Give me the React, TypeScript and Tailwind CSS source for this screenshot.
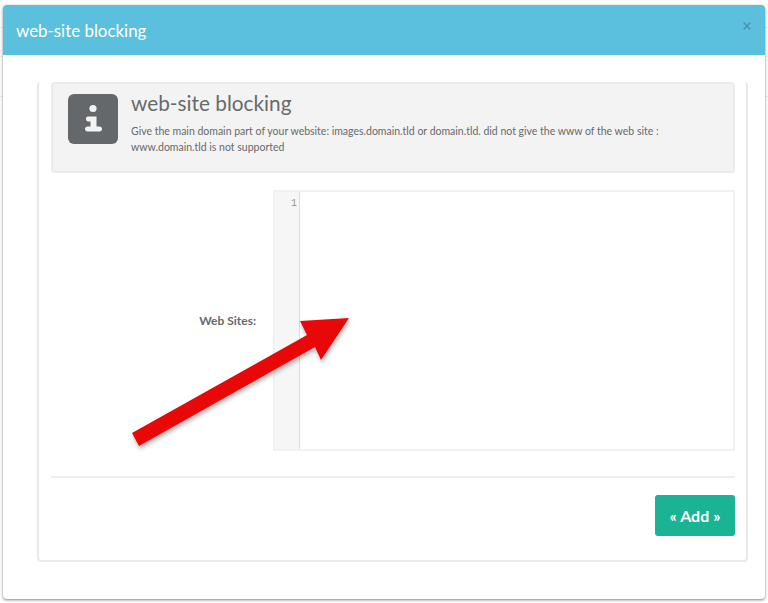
import React from 'react';
import { X } from 'lucide-react';

function InfoIcon() {
  return (
    <svg viewBox="0 0 50 50" className="h-[50px] w-[50px] shrink-0">
      <rect width="50" height="50" rx="6" fill="#65686a" />
      <circle cx="25" cy="14.500" r="3.600" fill="#f3f3f3" />
      <path
        d="M18 22.500h10.500v10h3c1.500 0 2.500 1 2.500 2.500s-1 2.500-2.500 2.500h-12c-1.500 0-2.500-1-2.500-2.500s1-2.500 2.500-2.500h3v-5h-2c-2 0-2.500-1-2.500-2.500s.5-2.500 2-2.500z"
        fill="#f3f3f3"
      />
    </svg>
  );
}

function Arrow() {
  return (
    <svg
      viewBox="0 0 240 160"
      className="absolute left-[120px] top-[300px] h-[160px] w-[240px] drop-shadow-[1px_3px_2px_rgba(0,0,0,0.3)]"
    >
      <polygon points="12,133 187,35 180,21 229,18 201,60 195,47 19,146" fill="#e90808" />
    </svg>
  );
}

// faint table rows of the page behind the modal
function Backdrop() {
  return (
    <div className="absolute inset-0">
      <div className="h-[28px] border-b border-[#eeeeee]" />
      <div className="h-[29px] border-b border-[#eeeeee]" />
      <div className="h-[40px] border-b border-[#eeeeee]" />
    </div>
  );
}

export default function App() {
  return (
    <div className="relative h-[603px] w-[768px] overflow-hidden bg-white font-['Lato',sans-serif] text-[#676a6c]">
      <Backdrop />
      <div className="relative pt-[5px] pl-[3px]">
        <div className="flex h-[594px] w-[762px] flex-col rounded-[4px] bg-white shadow-[0_1px_3px_rgba(0,0,0,0.5)]">
          <div className="flex h-[50px] items-start justify-between rounded-t-[4px] bg-[#5bc0de] pl-[13px] pr-[12px]">
            <h4 className="mt-[14px] text-[16.9px] leading-[23px] text-white">web-site blocking</h4>
            <X className="mt-[15px] h-[12px] w-[12px] text-[#4b8fa6]" strokeWidth={2.5} />
          </div>

          <div className="pl-[34px] pt-[27px]">
            <div className="h-[480px] w-[711px] rounded-[4px] border-r-2 border-b-2 border-l-2 border-[#e9e9e9] pl-[12px] pr-[11px]">
              <div className="flex h-[91px] w-[684px] rounded-[4px] border-2 border-[#ebebeb] bg-[#f3f3f3] pl-[15px] pt-[10px]">
                <InfoIcon />
                <div className="ml-[13px]">
                  <h3 className="-mt-[3px] text-[20.8px] leading-[24px] font-normal">web-site blocking</h3>
                  <p className="mt-[8px] w-[570px] text-[10.5px] leading-[16px]">
                    Give the main domain part of your website: images.domain.tld or domain.tld. did not give the www of the web site : www.domain.tld is not supported
                  </p>
                </div>
              </div>

              <div className="mt-[17px] flex h-[261px]">
                <label className="flex w-[205px] items-center justify-end text-[12px] font-bold">Web Sites:</label>
                <div className="ml-[17px] flex w-[462px] border-2 border-[#f1f1f1]">
                  <div className="w-[25px] border-r border-[#dddddd] bg-[#f6f6f6] pr-[2px] text-right font-['Liberation_Mono',monospace] text-[10px] leading-[24px] text-[#999977]">
                    1
                  </div>
                </div>
              </div>

              <div className="mt-[25px] h-[2px] w-[684px] bg-[#eeeeee]" />

              <div className="mt-[17px] flex w-[684px] justify-end">
                <button className="h-[41px] w-[80px] rounded-[3px] bg-[#1ab394] text-[16px] font-bold text-white">« Add »</button>
              </div>
            </div>
          </div>
        </div>
      </div>
      <Arrow />
    </div>
  );
}
